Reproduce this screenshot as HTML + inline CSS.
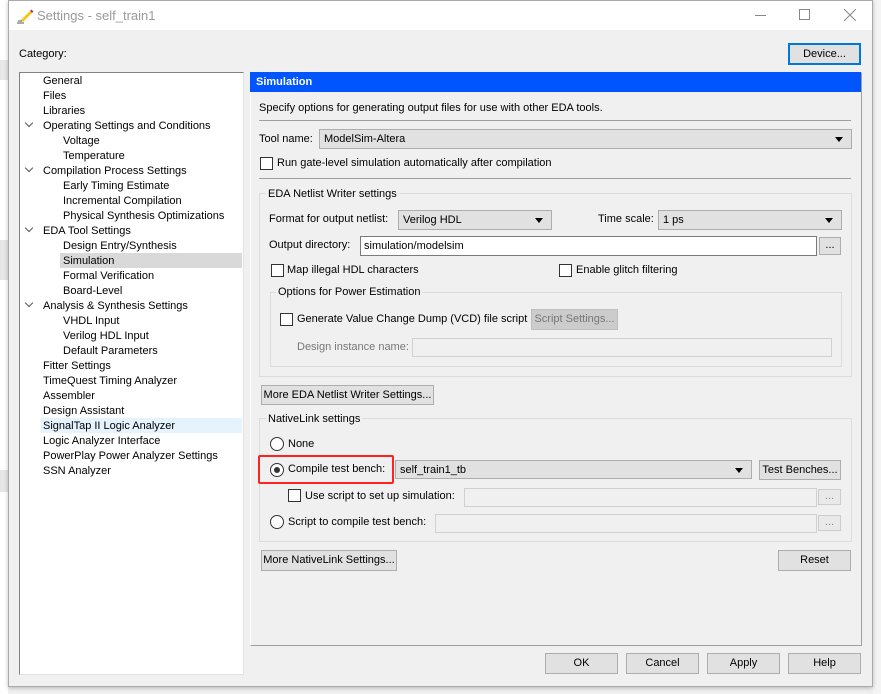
<!DOCTYPE html>
<html><head><meta charset="utf-8"><style>
*{box-sizing:border-box;margin:0;padding:0}
body{width:881px;height:694px;overflow:hidden;background:#f0f0f0;font-family:"Liberation Sans",sans-serif;font-size:11px;color:#000;position:relative}
.a{position:absolute}
.t{position:absolute;white-space:nowrap;line-height:15px;top:0}
.btn{position:absolute;background:#e1e1e1;border:1px solid #adadad;text-align:center;line-height:19px;white-space:nowrap;overflow:hidden}
.cb{position:absolute;width:13px;height:13px;border:1px solid #333;background:#fff}
.cmb{position:absolute;background:#e1e1e1;border:1px solid #adadad;line-height:18px;padding-left:4px}
.cmb:after{content:"";position:absolute;right:8px;top:7px;border-left:4px solid transparent;border-right:4px solid transparent;border-top:5px solid #000}
.grp{position:absolute;border:1px solid #dcdcdc}
.leg{position:absolute;background:#f0f0f0;padding:0 2px;line-height:15px}
.rad{position:absolute;width:14px;height:14px;border:1px solid #333;border-radius:50%;background:#fff}
.dis{position:absolute;background:#f0f0f0;border:1px solid #d0d0d0}
.dot{position:absolute;width:16px;height:16px;background:#e9e9e9;border:1px solid #ccc;color:#888;text-align:center;line-height:12px;font-size:11px}
.tr{position:absolute;left:43px;line-height:16px;white-space:nowrap}
.chev{position:absolute;left:26px;width:6px;height:6px;border-right:1.5px solid #555;border-bottom:1.5px solid #555;transform:rotate(45deg)}
</style></head><body>
<div class="a" style="left:0;top:0;width:8px;height:694px;background:#fff"></div>
<div class="a" style="left:0;top:60px;width:8px;height:20px;background:#e8e8e8"></div>
<div class="a" style="left:0;top:240px;width:8px;height:40px;background:#e6e6e6"></div>
<div class="a" style="left:0;top:470px;width:8px;height:22px;background:#e6e6e6"></div>
<div class="a" style="left:873px;top:0;width:8px;height:694px;background:#f4f4f4"></div>
<div class="a" style="left:8px;top:0;width:865px;height:687px;background:#f0f0f0;border:1px solid #aaa;box-shadow:0 1px 4px rgba(0,0,0,.25)"></div>
<div class="a" style="left:9px;top:1px;width:863px;height:29px;background:#fff"></div>
<svg class="a" style="left:16px;top:6px" width="18" height="18" viewBox="0 0 18 18"><path d="M5 14 L14 5 L16 7 L7 16 Z" fill="#f5c518"/><path d="M14 5 L15.5 3.5 L17.5 5.5 L16 7Z" fill="#c0305a"/><path d="M1 17H8M2 15H6" stroke="#555"/></svg>
<div class="t" style="left:37px;top:8px;font-size:13px;line-height:16px;color:#9a9a9a">Settings - self_train1</div>
<div class="a" style="left:755px;top:15px;width:11px;height:1px;background:#888"></div>
<div class="a" style="left:799px;top:9px;width:11px;height:11px;border:1px solid #888"></div>
<svg class="a" style="left:844px;top:9px" width="12" height="12"><path d="M0 0L12 12M12 0L0 12" stroke="#888"/></svg>
<div class="t" style="left:19px;top:47px">Category:</div>
<div class="btn" style="left:788px;top:43px;width:73px;height:22px;border:2px solid #0078d7;line-height:18px">Device...</div>
<div class="a" style="left:19px;top:72px;width:225px;height:603px;background:#fff;border:1px solid #828282;border-right-color:#e3e3e3;border-bottom-color:#e3e3e3"></div>
<div class="a" style="left:60px;top:253px;width:182px;height:15px;background:#d9d9d9"></div>
<div class="a" style="left:41px;top:418px;width:201px;height:15px;background:#e5f3ff"></div>
<div class="tr" style="top:73px">General</div>
<div class="tr" style="top:88px">Files</div>
<div class="tr" style="top:103px">Libraries</div>
<div class="chev" style="top:120px"></div><div class="tr" style="top:118px">Operating Settings and Conditions</div>
<div class="tr" style="top:133px;left:63px">Voltage</div>
<div class="tr" style="top:148px;left:63px">Temperature</div>
<div class="chev" style="top:165px"></div><div class="tr" style="top:163px">Compilation Process Settings</div>
<div class="tr" style="top:178px;left:63px">Early Timing Estimate</div>
<div class="tr" style="top:193px;left:63px">Incremental Compilation</div>
<div class="tr" style="top:208px;left:63px">Physical Synthesis Optimizations</div>
<div class="chev" style="top:225px"></div><div class="tr" style="top:223px">EDA Tool Settings</div>
<div class="tr" style="top:238px;left:63px">Design Entry/Synthesis</div>
<div class="tr" style="top:253px;left:63px">Simulation</div>
<div class="tr" style="top:268px;left:63px">Formal Verification</div>
<div class="tr" style="top:283px;left:63px">Board-Level</div>
<div class="chev" style="top:300px"></div><div class="tr" style="top:298px">Analysis &amp; Synthesis Settings</div>
<div class="tr" style="top:313px;left:63px">VHDL Input</div>
<div class="tr" style="top:328px;left:63px">Verilog HDL Input</div>
<div class="tr" style="top:343px;left:63px">Default Parameters</div>
<div class="tr" style="top:358px">Fitter Settings</div>
<div class="tr" style="top:373px">TimeQuest Timing Analyzer</div>
<div class="tr" style="top:388px">Assembler</div>
<div class="tr" style="top:403px">Design Assistant</div>
<div class="tr" style="top:418px">SignalTap II Logic Analyzer</div>
<div class="tr" style="top:433px">Logic Analyzer Interface</div>
<div class="tr" style="top:448px">PowerPlay Power Analyzer Settings</div>
<div class="tr" style="top:463px">SSN Analyzer</div>
<div class="a" style="left:250px;top:72px;width:612px;height:574px;border:1px solid #a0a0a0;border-top-color:#fff;border-left-color:#fff"></div>
<div class="a" style="left:250px;top:72px;width:611px;height:20px;background:#0055ff"></div>
<div class="t" style="left:256px;top:75px;color:#fff;font-weight:bold">Simulation</div>
<div class="t" style="left:259px;top:101px">Specify options for generating output files for use with other EDA tools.</div>
<div class="a" style="left:259px;top:120px;width:592px;height:1px;background:#a0a0a0"></div>
<div class="t" style="left:259px;top:132px">Tool name:</div>
<div class="cmb" style="left:319px;top:129px;width:533px;height:20px">ModelSim-Altera</div>
<div class="cb" style="left:260px;top:157px"></div>
<div class="t" style="left:277px;top:156px">Run gate-level simulation automatically after compilation</div>
<div class="a" style="left:259px;top:178px;width:592px;height:1px;background:#a0a0a0"></div>
<div class="grp" style="left:259px;top:193px;width:593px;height:184px"></div>
<div class="leg" style="left:266px;top:187px">EDA Netlist Writer settings</div>
<div class="t" style="left:269px;top:212px">Format for output netlist:</div>
<div class="cmb" style="left:398px;top:210px;width:154px;height:20px">Verilog HDL</div>
<div class="t" style="left:598px;top:212px">Time scale:</div>
<div class="cmb" style="left:658px;top:210px;width:184px;height:20px">1 ps</div>
<div class="t" style="left:269px;top:238px">Output directory:</div>
<div class="a" style="left:360px;top:236px;width:457px;height:20px;background:#fff;border:1px solid #7a7a7a;padding-left:3px;line-height:18px">simulation/modelsim</div>
<div class="btn" style="left:819px;top:237px;width:22px;height:18px;line-height:14px">...</div>
<div class="cb" style="left:271px;top:264px"></div>
<div class="t" style="left:287px;top:263px">Map illegal HDL characters</div>
<div class="cb" style="left:559px;top:264px"></div>
<div class="t" style="left:576px;top:263px">Enable glitch filtering</div>
<div class="grp" style="left:270px;top:292px;width:572px;height:75px"></div>
<div class="leg" style="left:276px;top:285px">Options for Power Estimation</div>
<div class="cb" style="left:280px;top:313px"></div>
<div class="t" style="left:297px;top:312px">Generate Value Change Dump (VCD) file script</div>
<div class="a" style="left:531px;top:309px;width:87px;height:21px;background:#ccc;border:1px solid #bfbfbf;color:#777;line-height:19px;text-align:center;white-space:nowrap;overflow:hidden">Script Settings...</div>
<div class="t" style="left:297px;top:340px;color:#777">Design instance name:</div>
<div class="dis" style="left:412px;top:338px;width:420px;height:19px"></div>
<div class="btn" style="left:261px;top:385px;width:173px;height:20px">More EDA Netlist Writer Settings...</div>
<div class="grp" style="left:259px;top:418px;width:593px;height:124px"></div>
<div class="leg" style="left:266px;top:412px">NativeLink settings</div>
<div class="rad" style="left:270px;top:437px"></div>
<div class="t" style="left:288px;top:437px">None</div>
<div class="rad" style="left:270px;top:463px"></div>
<div class="a" style="left:274px;top:467px;width:6px;height:6px;border-radius:50%;background:#333"></div>
<div class="t" style="left:288px;top:462px">Compile test bench:</div>
<div class="cmb" style="left:395px;top:460px;width:357px;height:19px">self_train1_tb</div>
<div class="a" style="left:258px;top:455px;width:136px;height:29px;border:2.5px solid #f22;border-radius:2px"></div>
<div class="btn" style="left:759px;top:460px;width:82px;height:20px">Test Benches...</div>
<div class="cb" style="left:288px;top:489px"></div>
<div class="t" style="left:305px;top:489px">Use script to set up simulation:</div>
<div class="dis" style="left:464px;top:488px;width:353px;height:19px"></div>
<div class="dot" style="left:818px;top:489px;width:23px">...</div>
<div class="rad" style="left:270px;top:515px"></div>
<div class="t" style="left:288px;top:515px">Script to compile test bench:</div>
<div class="dis" style="left:435px;top:514px;width:382px;height:19px"></div>
<div class="dot" style="left:818px;top:515px;width:23px">...</div>
<div class="btn" style="left:261px;top:550px;width:136px;height:21px">More NativeLink Settings...</div>
<div class="btn" style="left:778px;top:550px;width:73px;height:21px">Reset</div>
<div class="btn" style="left:545px;top:653px;width:73px;height:21px">OK</div>
<div class="btn" style="left:626px;top:653px;width:73px;height:21px">Cancel</div>
<div class="btn" style="left:707px;top:653px;width:73px;height:21px">Apply</div>
<div class="btn" style="left:788px;top:653px;width:73px;height:21px">Help</div>
</body></html>
